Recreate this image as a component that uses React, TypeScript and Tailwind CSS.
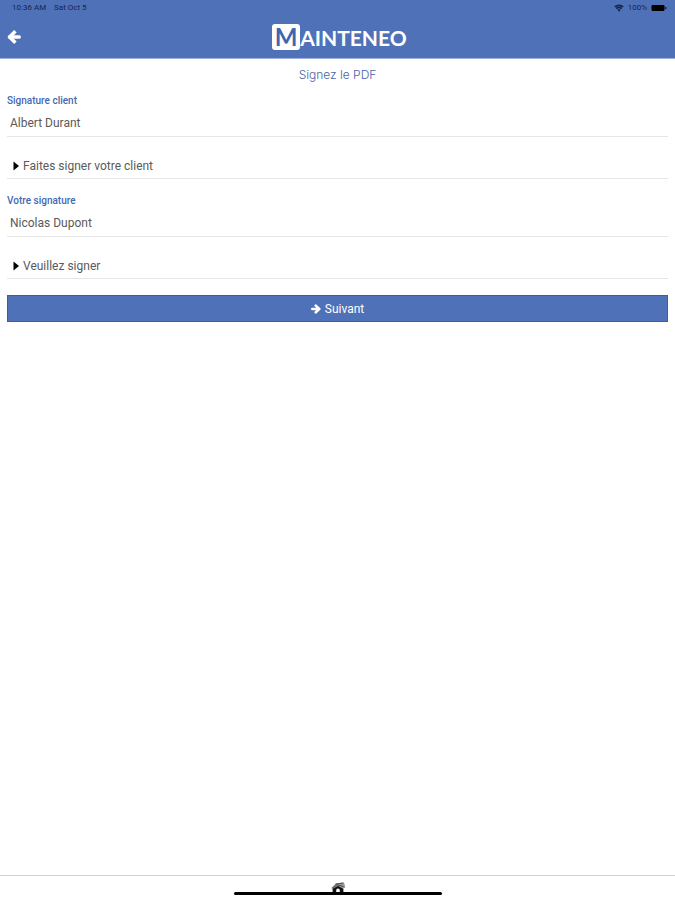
import React, { useState } from 'react';

interface SignatureFieldProps {
    id: string;
    label: string;
    defaultName: string;
    action: string;
}

const StatusBar: React.FC = () => (
    <div className="flex h-4 items-center justify-between pl-3 pr-2 text-[8px] leading-4 text-[#16264f]">
        <div className="flex gap-2">
            <span>10:36 AM</span>
            <span>Sat Oct 5</span>
        </div>
        <div className="flex items-center gap-1">
            <svg className="h-2 w-2.5" viewBox="0 0 16 12" fill="currentColor" aria-hidden="true">
                <path d="M8 12 5.4 8.9a4 4 0 0 1 5.2 0z" />
                <path d="M1.3 4.3a10.3 10.3 0 0 1 13.4 0M3.6 7a6.8 6.8 0 0 1 8.8 0" fill="none" stroke="currentColor" strokeWidth="2.8" />
            </svg>
            <span>100%</span>
            <svg className="h-2 w-4" viewBox="0 0 16 8" fill="#000" aria-hidden="true">
                <rect x="0.5" y="1" width="13" height="6" rx="1.2" />
                <rect x="14.3" y="3" width="1" height="2" rx="0.5" />
            </svg>
        </div>
    </div>
);

const Logo: React.FC = () => (
    <div className="flex items-center pl-1 font-['Lato',sans-serif] text-white">
        <span className="flex h-[26px] w-7 items-center justify-center rounded-[3px] bg-white text-2xl font-bold leading-none text-[#3f66b0]">
            M
        </span>
        <span className="text-[21px] font-bold leading-none">AINTENEO</span>
    </div>
);

const ArrowIcon: React.FC<{ className: string }> = ({ className }) => (
    <svg className={className} viewBox="0 0 16 16" fill="none" stroke="currentColor" strokeWidth="4" aria-hidden="true">
        <path d="M3 8h11" strokeLinecap="round" />
        <path d="M8.2 2.8 2.9 8l5.3 5.2" strokeLinecap="square" strokeLinejoin="round" />
    </svg>
);

const SignatureField: React.FC<SignatureFieldProps> = ({ id, label, defaultName, action }) => {
    const [name, setName] = useState(defaultName);
    const [open, setOpen] = useState(false);

    return (
        <div className="pb-4">
            <label htmlFor={id} className="block text-[10px] font-medium leading-3 text-[#4468b2]">
                {label}
            </label>
            <input
                id={id}
                type="text"
                value={name}
                onChange={(e) => setName(e.target.value)}
                className="block h-[30px] w-full border-b border-[#e6e6e6] bg-transparent px-[3px] pt-0.5 text-xs text-[#5a5a5a] outline-none"
            />
            <button
                type="button"
                aria-expanded={open}
                onClick={() => setOpen(!open)}
                className="mt-4 flex h-[26px] w-full items-center gap-1 border-b border-[#e6e6e6] pl-1.5 text-xs text-[#5a5a5a]"
            >
                <svg className={open ? 'h-2.5 w-1.5 rotate-90' : 'h-2.5 w-1.5'} viewBox="0 0 6 10" aria-hidden="true">
                    <path d="M.5.5 6 5 .5 9.5z" fill="#000" />
                </svg>
                {action}
            </button>
            {open && <canvas className="h-40 w-full border border-[#e6e6e6]" />}
        </div>
    );
};

const HomeIcon: React.FC = () => (
    <svg className="h-3 w-4" viewBox="0 0 16 12" aria-hidden="true">
        <path d="M1 6.2 6 1.2 14 .4 15.4 5.4 13 6.5 8 3.6 3 6.8z" fill="#999" />
        <path d="M5.4 2.2 13.2 1M2.4 6 7 2.8 13.6 4.6" fill="none" stroke="#444" strokeWidth="0.9" />
        <path d="M2.6 6.8 8 3.8l5.4 3V12H2.6z" fill="#111" />
        <path d="M6.2 10.4V8.4a1.8 1.8 0 0 1 3.6 0v2z" fill="#fff" />
    </svg>
);

const App: React.FC = () => {
    return (
        <div className="flex min-h-screen flex-col bg-white font-['Roboto',sans-serif]">
            <header className="border-b border-[#9db2dc] bg-[#4e71b7]">
                <StatusBar />
                <div className="grid h-[42px] grid-cols-[1fr_auto_1fr] items-center px-[7px]">
                    <button type="button" aria-label="Retour" className="justify-self-start text-white">
                        <ArrowIcon className="h-3.5 w-3.5" />
                    </button>
                    <Logo />
                </div>
            </header>

            <main className="flex-1 px-[7px]">
                <h1 className="py-2 text-center font-['Inter',sans-serif] text-xs font-light leading-4 text-[#4a62a8]">Signez le PDF</h1>
                <form className="pt-1" onSubmit={(e) => e.preventDefault()}>
                    <SignatureField id="client" label="Signature client" defaultName="Albert Durant" action="Faites signer votre client" />
                    <SignatureField id="technicien" label="Votre signature" defaultName="Nicolas Dupont" action="Veuillez signer" />
                    <button
                        type="submit"
                        className="flex h-[27px] w-full items-center justify-center gap-1 border border-[#3260b0] bg-[#4e71b7] text-xs text-white"
                    >
                        <ArrowIcon className="h-2.5 w-2.5 rotate-180" />
                        Suivant
                    </button>
                </form>
            </main>

            <footer className="flex h-[25px] flex-col items-center border-t border-[#cfcfe8] pt-1.5">
                <a href="#accueil" aria-label="Accueil">
                    <HomeIcon />
                </a>
                <div className="relative -top-0.5 h-[3px] w-[208px] shrink-0 rounded-full bg-black" />
            </footer>
        </div>
    );
};

export default App;
